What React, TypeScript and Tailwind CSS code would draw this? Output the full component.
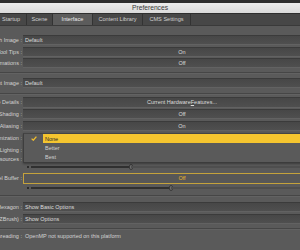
import React from 'react'

const font = { fontFamily: '"Liberation Sans", Arial, sans-serif' }

function Label({ text }: { text: string }) {
  return (
    <div className="w-[22px] shrink-0 flex justify-end items-center whitespace-nowrap text-[5.5px] text-[#d2d2d2]">
      {text} :
    </div>
  )
}

function Field({ children, center, h = 'h-[10px]' }: { children?: React.ReactNode; center?: boolean; h?: string }) {
  return (
    <div
      className={`w-[318px] shrink-0 ${h} flex items-center ${center ? 'justify-center' : 'pl-[2px]'} bg-gradient-to-b from-[#474747] to-[#4f4f4f] border-t border-t-[#3b3b3b] border-b border-b-[#626262] text-[5.5px] text-[#dcdcdc] whitespace-nowrap`}
    >
      {children}
    </div>
  )
}

function Row({ label, children, className = '' }: { label: string; children?: React.ReactNode; className?: string }) {
  return (
    <div className={`flex gap-[1px] ${className}`}>
      <Label text={label} />
      {children}
    </div>
  )
}

function Separator({ className = '' }: { className?: string }) {
  return <div className={`h-[2px] border-t border-t-[#464646] border-b border-b-[#626262] ${className}`} />
}

function Slider({ thumb, className = '' }: { thumb: number; className?: string }) {
  return (
    <div className={`flex items-center h-[4px] ${className}`}>
      <div className="w-[27px] shrink-0" />
      <div className="w-[2px] h-[2px] bg-[#2c2c2c] shrink-0" />
      <div className="w-[2px] shrink-0" />
      <div className="h-[2px] bg-[#303030] shrink-0" style={{ width: thumb - 31 }} />
      <div className="w-[4px] h-[6px] rounded-[2px] bg-[#6b6b6b] border border-[#3a3a3a] shrink-0 -mx-[2px]" />
      <div className="h-[2px] flex-1 bg-[#4e4e4e]" />
    </div>
  )
}

const tabs = [
  { name: 'Startup', w: 'w-[31px] -ml-[4px]' },
  { name: 'Scene', w: 'w-[26px]' },
  { name: 'Interface', w: 'w-[40px]', active: true },
  { name: 'Content Library', w: 'w-[50px]' },
  { name: 'CMS Settings', w: 'w-[48px]' },
]

export default function App() {
  return (
    <div className="w-[300px] h-[250px] overflow-hidden bg-[#5a5a5a] flex flex-col" style={font}>
      <div className="h-[3px] bg-[#2e2e2e] shrink-0" />
      <div className="h-[10px] shrink-0 bg-gradient-to-b from-[#ececec] to-[#dadada] flex items-center justify-center text-[6.7px] text-[#3a3a3a]">
        Preferences
      </div>
      <div className="h-[13px] shrink-0 flex bg-[#474747] border-t border-t-[#2f2f2f] border-b border-b-[#3a3a3a]">
        {tabs.map(t => (
          <div
            key={t.name}
            className={`${t.w} shrink-0 flex items-center justify-center whitespace-nowrap text-[5.6px] border-r border-r-[#333] ${t.active ? 'bg-[#5c5c5c] text-[#ececec]' : 'text-[#cfcfcf]'}`}
          >
            {t.name}
          </div>
        ))}
      </div>

      <div className="flex flex-col">
        <Row label="Splash Image" className="mt-[9px]"><Field>Default</Field></Row>
        <Row label="Show Tool Tips" className="mt-[2px]"><Field center>On</Field></Row>
        <Row label="Menu Animations" className="mt-[1px]"><Field center>Off</Field></Row>
        <Separator className="mt-[4px]" />
        <Row label="Layout Image" className="mt-[4px]"><Field>Default</Field></Row>
        <Separator className="mt-[5px]" />
        <Row label="Hardware Details" className="mt-[2px]">
          <Field center h="h-[11px]">
            Current Hardware <span className="underline">F</span>eatures...
          </Field>
        </Row>
        <Row label="Per Pixel Shading" className="mt-[1px]"><Field center>Off</Field></Row>
        <Row label="Line Anti-Aliasing" className="mt-[2px]"><Field center>On</Field></Row>

        <div className="relative mt-[2px]">
          <Row label="Display Optimization"><Field /></Row>
          <Row label="Per Pixel Lighting" className="mt-[2px]"><Field /></Row>
          <Row label="Texture Resources" className="h-[9px]" />
          <div className="absolute top-0 left-[23px] w-[318px] h-[30px] bg-[#5a5a5a] border-l border-l-[#3e3e3e] border-t border-t-[#444] border-b border-b-[#3c3c3c] shadow-[0_1px_2px_rgba(0,0,0,0.35)] flex flex-col text-[5.5px]">
            <div className="h-[9.5px] flex items-center">
              <div className="w-[19px] h-full flex items-center justify-center shrink-0">
                <svg width="6" height="5" viewBox="0 0 6 5">
                  <path d="M0.6 2.6 L2.3 4.2 L5.4 0.6" fill="none" stroke="#f0bd2e" strokeWidth="1.3" />
                </svg>
              </div>
              <div className="flex-1 h-full bg-[#f5c52f] text-[#2a2a2a] flex items-center pl-[2px]">None</div>
            </div>
            <div className="h-[9.5px] flex items-center pl-[21px] text-[#cfcfcf]">Better</div>
            <div className="h-[9.5px] flex items-center pl-[21px] text-[#cfcfcf]">Best</div>
          </div>
        </div>

        <Slider thumb={131} className="mt-[1px]" />
        <Row label="Pixel Buffer" className="mt-[4px]">
          <div className="w-[318px] shrink-0 h-[11px] border border-[#c4a23c] bg-[#575757] flex items-center justify-center text-[5.5px] text-[#e8b52c]">
            Off
          </div>
        </Row>
        <Slider thumb={171} className="mt-[2px]" />
        <Separator className="mt-[5px]" />
        <Row label="Hexagon" className="mt-[5px]"><Field>Show Basic Options</Field></Row>
        <Row label="GoZ (ZBrush)" className="mt-[2px]"><Field>Show Options</Field></Row>
        <Separator className="mt-[4px]" />
        <Row label="Multi-Threading" className="mt-[2px] h-[8px]">
          <div className="flex items-center pl-[2px] whitespace-nowrap text-[5.5px] text-[#d2d2d2]">
            OpenMP not supported on this platform
          </div>
        </Row>
      </div>
    </div>
  )
}
